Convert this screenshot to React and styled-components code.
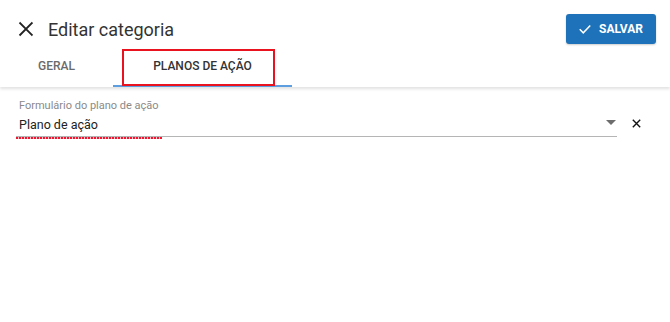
import React from "react";
import styled, { createGlobalStyle } from "styled-components";

const GlobalStyle = createGlobalStyle`
  body {
    margin: 0;
    background: #ffffff;
    font-family: Roboto, "Liberation Sans", Arial, sans-serif;
  }
`;

const Page = styled.div`
  width: 670px;
  height: 322px;
  background: #fff;
`;

const Header = styled.header`
  display: flex;
  flex-direction: column;
  height: 87px;
  box-shadow: 0 2px 3px rgba(0, 0, 0, 0.12);
`;

const TopRow = styled.div`
  display: flex;
  align-items: center;
  height: 30px;
  padding: 14px 14px 0 16px;
`;

const IconButton = styled.button`
  display: flex;
  align-items: center;
  justify-content: center;
  width: ${(p) => p.size || 20}px;
  height: ${(p) => p.size || 20}px;
  padding: 0;
  border: 0;
  background: none;
  color: ${(p) => p.color || "#222"};
  cursor: pointer;
`;

const Title = styled.h1`
  margin: 0 0 0 12px;
  font-size: 18px;
  font-weight: 400;
  color: #333;
  flex: 1;
`;

const SaveButton = styled.button`
  display: flex;
  align-items: center;
  gap: 7px;
  height: 30px;
  width: 90px;
  padding: 0 0 0 12px;
  border: 0;
  border-radius: 3px;
  background: #1e72b9;
  color: #fff;
  font-family: inherit;
  font-size: 12px;
  font-weight: 700;
  box-shadow: 0 1px 2px rgba(0, 0, 0, 0.2);
`;

const Tabs = styled.nav`
  display: flex;
  height: 43px;
`;

const Tab = styled.div`
  position: relative;
  display: flex;
  align-items: center;
  justify-content: center;
  width: ${(p) => p.w}px;
  box-sizing: border-box;
  font-size: 12px;
  font-weight: 500;
  text-transform: uppercase;
  color: ${(p) => (p.active ? "#333" : "#6a6a6a")};
  border-bottom: 2px solid ${(p) => (p.active ? "#5d9ee0" : "transparent")};
  padding-top: 2px;
`;

const Highlight = styled.span`
  position: absolute;
  left: 9px;
  right: 17px;
  top: 5px;
  bottom: -1px;
  border: 2px solid #e8131f;
  pointer-events: none;
`;

const Content = styled.main`
  padding: 12px 0 0 16px;
`;

const FieldRow = styled.div`
  display: flex;
  align-items: flex-end;
`;

const Field = styled.div`
  position: relative;
  flex: 1;
  padding: 0 0 2px 3px;
  border-bottom: 1px solid #b5b5b5;
`;

const Label = styled.div`
  font-size: 11px;
  line-height: 13px;
  color: #8a8a8a;
`;

const ValueRow = styled.div`
  display: flex;
  align-items: center;
  justify-content: space-between;
  height: 20px;
  margin-top: 2px;
`;

const Value = styled.span`
  font-size: 12.5px;
  color: #222;
`;

const Caret = styled.span`
  width: 0;
  height: 0;
  margin-right: 1px;
  margin-bottom: 4px;
  border-left: 5px solid transparent;
  border-right: 5px solid transparent;
  border-top: 5px solid #6d6d6d;
`;

const Squiggle = styled.span`
  position: absolute;
  left: 0;
  bottom: -3px;
  width: 146px;
  height: 2px;
  background: repeating-linear-gradient(
    90deg,
    #f0142e 0 2px,
    rgba(240, 20, 46, 0.25) 2px 3px
  );
`;

const ClearSlot = styled.div`
  display: flex;
  width: 53px;
  box-sizing: border-box;
  padding: 0 0 8px 14px;
`;

const CloseIcon = ({ size = 20, stroke = 2 }) => (
  <svg width={size} height={size} viewBox="0 0 24 24" fill="none">
    <path
      d="M5 5 L19 19 M19 5 L5 19"
      stroke="currentColor"
      strokeWidth={stroke}
      strokeLinecap="square"
    />
  </svg>
);

const CheckIcon = () => (
  <svg width="14" height="14" viewBox="0 0 24 24" fill="none">
    <path d="M3 12.5 L9 18.5 L21 6" stroke="#fff" strokeWidth="2.6" />
  </svg>
);

export default function App() {
  return (
    <Page>
      <GlobalStyle />
      <Header>
        <TopRow>
          <IconButton size={20}>
            <CloseIcon size={20} stroke={2.2} />
          </IconButton>
          <Title>Editar categoria</Title>
          <SaveButton>
            <CheckIcon />
            SALVAR
          </SaveButton>
        </TopRow>
        <Tabs>
          <Tab w={113}>Geral</Tab>
          <Tab w={179} active>
            Planos de ação
            <Highlight />
          </Tab>
        </Tabs>
      </Header>
      <Content>
        <FieldRow>
          <Field>
            <Label>Formulário do plano de ação</Label>
            <ValueRow>
              <Value>Plano de ação</Value>
              <Caret />
            </ValueRow>
            <Squiggle />
          </Field>
          <ClearSlot>
            <IconButton size={11} color="#111">
              <CloseIcon size={11} stroke={3} />
            </IconButton>
          </ClearSlot>
        </FieldRow>
      </Content>
    </Page>
  );
}
